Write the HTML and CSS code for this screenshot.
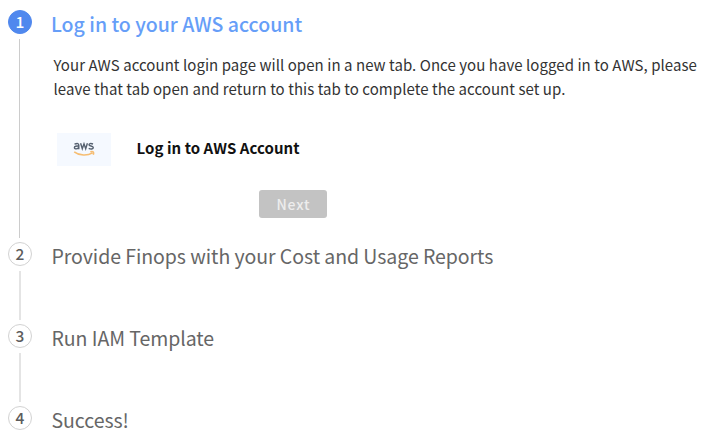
FILE: index.html
```html
<!DOCTYPE html>
<html lang="en">
<head>
<meta charset="utf-8">
<title>AWS account setup</title>
<link rel="stylesheet" href="styles.css">
</head>
<body>
<ol class="steps">
  <li class="step step-login active">
    <div class="rail"><span class="badge">1</span><span class="line"></span></div>
    <div class="content">
      <h2 class="title">Log in to your AWS account</h2>
      <p class="text">Your AWS account login page will open in a new tab. Once you have logged in to AWS, please<br>leave that tab open and return to this tab to complete the account set up.</p>
      <div class="login">
        <span class="logo">
          <svg width="22" height="17" viewBox="0 0 22 17" fill="none">
            <g stroke="#566170" stroke-width="1.4">
              <path d="M1.5 3.2Q5.800 1.500 5.800 4.200V8.300M5.800 5.200C3.500 4.800 1.300 5.200 1.400 6.700C1.600 8.600 4.900 8 5.800 6.300"/>
              <path d="M7.600 2.300L9.300 7.700L11 2.800L12.700 7.700L14.400 2.300"/>
              <path d="M20 3C17.500 1.900 16 2.700 16 3.800C16 5.400 20.300 4.700 20.300 6.600C20.300 8.300 17.600 8.300 15.700 7.400"/>
            </g>
            <path d="M1.200 10.800C6.500 14.900 14.500 15 19.500 11.800M17.300 10.800Q21.800 9.600 20.300 13.800" stroke="#f6bd72" stroke-width="1.600"/>
          </svg>
        </span>
        <span class="login-label">Log in to AWS Account</span>
      </div>
      <button class="next" disabled>Next</button>
    </div>
  </li>
  <li class="step step-reports">
    <div class="rail"><span class="badge">2</span><span class="line"></span></div>
    <div class="content"><h2 class="title">Provide Finops with your Cost and Usage Reports</h2></div>
  </li>
  <li class="step step-template">
    <div class="rail"><span class="badge">3</span><span class="line"></span></div>
    <div class="content"><h2 class="title">Run IAM Template</h2></div>
  </li>
  <li class="step step-success">
    <div class="rail"><span class="badge">4</span></div>
    <div class="content"><h2 class="title">Success!</h2></div>
  </li>
</ol>
</body>
</html>
```

FILE: styles.css
```css
* { box-sizing: border-box; }
body {
  margin: 0;
  background: #fff;
  font-family: "Noto Sans CJK SC", "Noto Sans", sans-serif;
}
.steps { list-style: none; margin: 0; padding: 10px 0 0 8px; }
.step { display: flex; gap: 20px; height: 82px; }
.step-login { height: 232px; }
.step-success { height: 28px; }
.rail { display: flex; flex-direction: column; align-items: center; width: 24px; flex: none; }
.badge {
  width: 24px; height: 24px; flex: none;
  border: 1px solid #d2d2d2; border-radius: 50%;
  font-size: 15.5px; line-height: 21px; font-weight: 500; text-align: center; color: #5c5c5c;
}
.active .badge { background: #5088ee; border-color: #5088ee; color: #fff; }
.line { width: 2px; flex: 1; margin: 5px 0 4px; background: #e4e4e4; }
.active .line { width: 1px; margin-right: 1px; background: #ccc; }
.content { flex: 1; white-space: nowrap; }
.title { margin: 0 0 0 -0.5px; height: 28px; font-size: 19.5px; line-height: 28px; font-weight: 400; color: #666; letter-spacing: -0.06px; }
.active .title { margin-left: -1px; color: #669ef8; font-weight: 500; letter-spacing: 0; }
.text { margin: 15px 0 0 1.5px; font-size: 15px; line-height: 24px; color: #333; letter-spacing: 0.055px; }
.login { display: flex; align-items: center; margin: 32px 0 0 5px; height: 33px; }
.logo { display: flex; align-items: center; justify-content: center; width: 54px; height: 33px; background: #f5f9ff; }
.login-label { margin: -4px 0 0 25.5px; font-size: 15px; line-height: 24px; font-weight: 700; color: #111; letter-spacing: 0.05px; }
.next {
  display: block; width: 68px; height: 28px; margin: 24px 0 0 207px; padding: 0 0 0 1px;
  border: 0; border-radius: 3px; background: #c3c3c3; color: #ededed;
  font: 500 14px/28px "Noto Sans CJK SC", sans-serif; letter-spacing: 0.9px;
}
```
